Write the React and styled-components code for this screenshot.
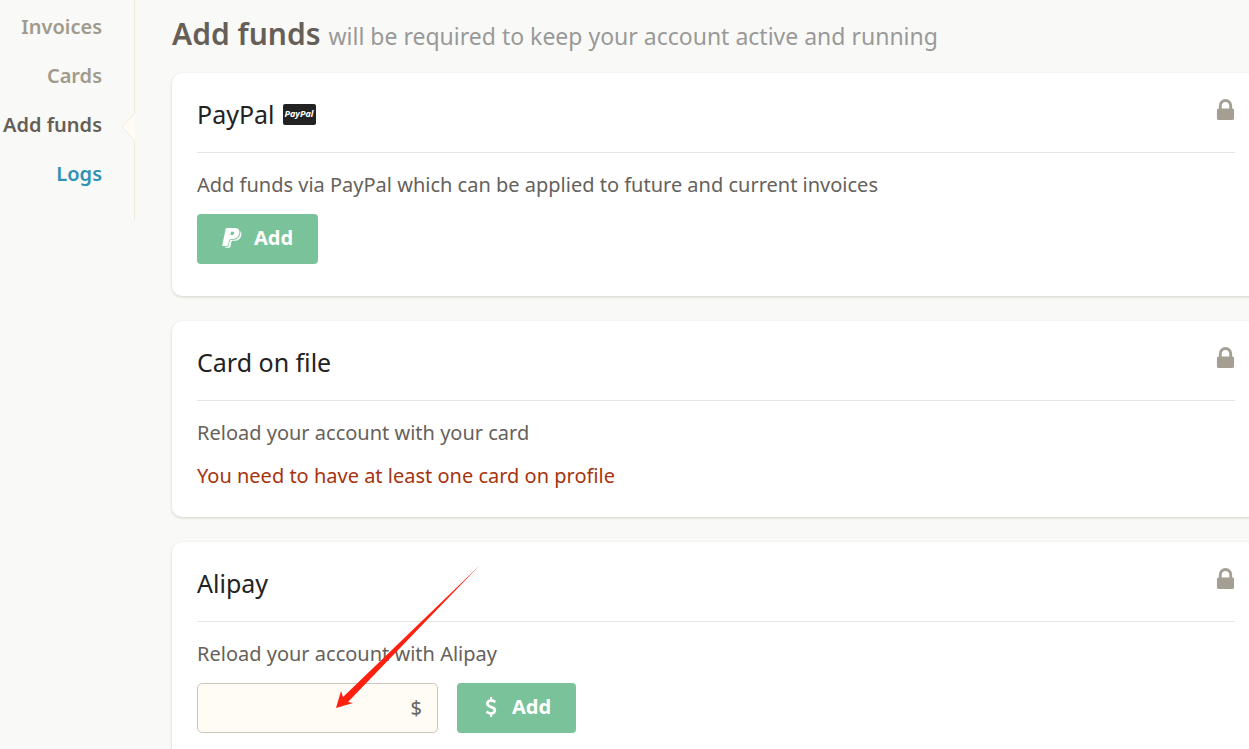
import styled, { createGlobalStyle } from 'styled-components';

const GlobalStyle = createGlobalStyle`
  * {
    box-sizing: border-box;
  }
  body {
    margin: 0;
    background: #f9f9f7;
    color: #66615b;
    font-family: "Noto Sans", "Open Sans", sans-serif;
    font-size: 20px;
    line-height: 28px;
  }
`;

const Page = styled.div`
  position: relative;
  display: flex;
  align-items: flex-start;
  min-height: 100vh;
  overflow-x: clip;
`;

const Sidebar = styled.nav`
  flex: none;
  width: 135px;
  padding: 2px 32px 22px 0;
  border-right: 1px solid #f0eadd;
`;

const NavList = styled.ul`
  display: flex;
  flex-direction: column;
  margin: 0;
  padding: 0;
  list-style: none;
`;

const NavItem = styled.li`
  display: flex;
  align-items: center;
  justify-content: flex-end;
  height: 49px;
`;

const NavLink = styled.a`
  color: ${(props) => props.$color || '#a19a8d'};
  font-weight: 600;
  text-decoration: none;
  white-space: nowrap;
`;

const ActiveMark = styled.svg`
  position: absolute;
  top: 112px;
  left: 121px;
`;

const Main = styled.main`
  flex: 1;
  min-width: 0;
  margin-right: -11px;
  padding: 12px 0 0 37px;
`;

const PageTitle = styled.h1`
  display: flex;
  align-items: baseline;
  gap: 8px;
  margin: 0 0 17px;
  color: #665f57;
  font-size: 30px;
  font-weight: 600;
  line-height: 44px;
`;

const Subtitle = styled.small`
  color: #999;
  font-size: 23px;
  font-weight: 400;
  line-height: 32px;
`;

const Card = styled.section`
  margin-bottom: 25px;
  padding: 22px 25px 27px;
  border-radius: 10px;
  background: #fff;
  box-shadow: 0 1px 3px #d5d0c8;
`;

const CardHeader = styled.header`
  display: flex;
  align-items: flex-start;
  justify-content: space-between;
  height: 58px;
  margin-bottom: 18px;
  border-bottom: 1px solid #e5e5e5;
`;

const CardTitle = styled.h2`
  display: flex;
  align-items: center;
  gap: 8px;
  margin: 0;
  color: #222;
  font-size: 25px;
  font-weight: 400;
  line-height: 38px;
`;

const PayPalBadge = styled.span`
  width: 33px;
  height: 21px;
  border-radius: 2px;
  background: #222;
  color: #fff;
  font: italic 700 9px/20px "Open Sans", sans-serif;
  text-align: center;
`;

const Lock = styled.svg`
  margin-top: 4px;
`;

const Text = styled.p`
  margin: 0 0 15px;
  color: ${(props) => (props.$warning ? '#a5340f' : '#66615b')};

  &:last-child {
    margin-bottom: 0;
  }
`;

const Form = styled.form`
  display: flex;
  gap: 19px;
  margin-bottom: 5px;
`;

const Button = styled.button`
  display: flex;
  align-items: center;
  gap: 12px;
  height: 50px;
  padding: 0 25px 2px;
  border: 0;
  border-radius: 4px;
  background: #7ac29a;
  color: #fff;
  font: inherit;
  font-weight: 700;
`;

const Amount = styled.label`
  display: flex;
  align-items: center;
  width: 241px;
  height: 50px;
  padding: 0 15px;
  border: 1px solid #ccc5b9;
  border-radius: 5px;
  background: #fffcf5;
`;

const AmountInput = styled.input`
  flex: 1;
  min-width: 0;
  border: 0;
  outline: 0;
  background: transparent;
  color: inherit;
  font: inherit;
`;

const Arrow = styled.svg`
  position: absolute;
  top: 560px;
  left: 330px;
  pointer-events: none;
`;

function LockIcon() {
  return (
    <Lock width="19" height="22" viewBox="-64 -1408 1280 1472" fill="#a49e93" aria-hidden="true">
      <path
        transform="scale(1 -1)"
        d="M320 768h512v192q0 106-75 181t-181 75-181-75-75-181v-192zM1152 672v-576q0-40-28-68t-68-28h-960q-40 0-68 28t-28 68v576q0 40 28 68t68 28h32v192q0 184 132 316t316 132 316-132 132-316v-192h32q40 0 68-28t28-68z"
      />
    </Lock>
  );
}

function PayPalIcon() {
  return (
    <svg width="20" height="20" viewBox="0 0 20 20" fill="#fff" aria-hidden="true">
      <path d="M4.600 0h7.800c3.800 0 5.600 1.900 5 5.300-.7 4-3.600 5.900-7.400 5.900H8.200c-.6 0-.9.3-1 .8l-1.200 5.300c-.1.500-.4.700-.9.700H.8c-.5 0-.7-.3-.6-.7L3.700.8c.1-.5.400-.8.900-.8zm4.400 3.700-.7 3.400h1.100c1.600 0 2.500-.4 2.800-1.800.2-1.200-.5-1.600-1.900-1.600z" fillRule="evenodd" />
      <path d="M18.200 3.100c1.100.9 1.400 2.400 1.100 4.100-.7 3.700-3.400 5.500-6.900 5.500h-2c-.5 0-.8.300-.9.700l-1.200 5.500c-.1.500-.4.800-.9.800H3.500c-.4 0-.6-.3-.5-.9h2.400c.7 0 1.100-.4 1.200-1l1.200-5c.1-.5.400-.8.900-.8h1.800c4.300 0 7.200-2.300 7.800-6.700.1-.9 0-1.600-.1-2.200z" />
    </svg>
  );
}

function DollarIcon() {
  return (
    <svg width="18" height="20" viewBox="-295 0 1613 1792" fill="#fff" aria-hidden="true">
      <path d="M978 1185q0 153-99.500 263.500t-258.500 136.500v175q0 14-9 23t-23 9h-135q-13 0-22.500-9.500t-9.500-22.500v-175q-66-9-127.500-31t-101.500-44.500-74-48-46.500-37.500-17.500-18q-17-21-2-41l103-135q7-10 23-12 15-2 24 9l2 2q113 99 243 125 37 8 74 8 81 0 142.500-43t61.500-122q0-28-15-53t-33.500-42-58.500-37.500-66-32-80-32.500q-39-16-61.500-25t-61.500-26.500-62.500-31-56.500-35.500-53.500-42.500-43.500-49-35.500-58-21-66.500-8.500-78q0-138 98-242t255-134v-180q0-13 9.500-22.500t22.500-9.500h135q14 0 23 9t9 23v176q57 6 110.500 23t87 33.500 63.500 37.500 39 29 15 14q17 18 5 38l-81 146q-8 15-23 16-14 3-27-7-3-3-14.500-12t-39-26.500-58.500-32-74.500-26-85.500-11.500q-95 0-155 43t-60 111q0 26 8.500 48t29.500 41.500 39.500 33 56 31 60.500 27 70 27.500q53 20 81 31.500t76 35 75.500 42.500 62 50 53 63.500 31.500 76.500 13 94z" />
    </svg>
  );
}

function PaymentCard({ title, badge, children }) {
  return (
    <Card>
      <CardHeader>
        <CardTitle>
          {title}
          {badge}
        </CardTitle>
        <LockIcon />
      </CardHeader>
      {children}
    </Card>
  );
}

function App() {
  return (
    <>
      <GlobalStyle />
      <Page>
        <Sidebar>
          <NavList>
            <NavItem><NavLink href="#invoices">Invoices</NavLink></NavItem>
            <NavItem><NavLink href="#cards">Cards</NavLink></NavItem>
            <NavItem><NavLink href="#funds" $color="#665f57" aria-current="page">Add funds</NavLink></NavItem>
            <NavItem><NavLink href="#logs" $color="#3091b2">Logs</NavLink></NavItem>
          </NavList>
        </Sidebar>
        <ActiveMark width="14" height="30" viewBox="0 0 14 30" aria-hidden="true">
          <path d="M14 1 1 15l13 14" fill="#fffcf5" stroke="#f0eadd" />
        </ActiveMark>
        <Main>
          <PageTitle>
            Add funds
            <Subtitle>will be required to keep your account active and running</Subtitle>
          </PageTitle>
          <PaymentCard title="PayPal" badge={<PayPalBadge>PayPal</PayPalBadge>}>
            <Text>Add funds via PayPal which can be applied to future and current invoices</Text>
            <Form>
              <Button type="button"><PayPalIcon />Add</Button>
            </Form>
          </PaymentCard>
          <PaymentCard title="Card on file">
            <Text>Reload your account with your card</Text>
            <Text $warning>You need to have at least one card on profile</Text>
          </PaymentCard>
          <PaymentCard title="Alipay">
            <Text>Reload your account with Alipay</Text>
            <Form>
              <Amount>
                <AmountInput type="text" aria-label="Amount" />
                $
              </Amount>
              <Button type="button"><DollarIcon />Add</Button>
            </Form>
          </PaymentCard>
        </Main>
        <Arrow width="160" height="155" viewBox="0 0 160 155" fill="#ff2010" aria-hidden="true">
          <path d="M149 6 18 142l5 1-17 5 5-17 2 6z" />
        </Arrow>
      </Page>
    </>
  );
}

export default App;
